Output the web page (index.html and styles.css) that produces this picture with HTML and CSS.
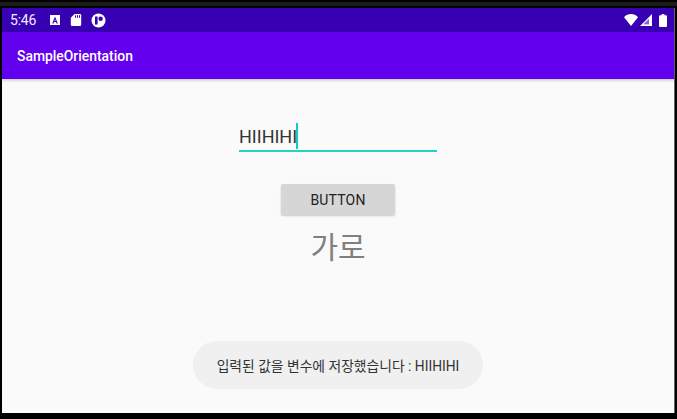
FILE: index.html
```html
<!DOCTYPE html>
<html lang="ko">
<head>
  <meta charset="UTF-8" />
  <title>SampleOrientation</title>
  <link rel="stylesheet" href="styles.css">
</head>
<body>
  <div class="screen">
    <div class="status-bar">
      <span class="clock">5:46</span>
      <div class="notif-icons">
        <svg width="12" height="12" viewBox="0 0 12 12"><path fill="#fff" d="M1 1h10v10H1z"/><path fill="#3700b3" d="M6 2.6 8.8 9.4H7.5L7 8.1H5L4.5 9.4H3.2zM5.4 7h1.2L6 5.3z"/></svg>
        <svg width="12" height="14" viewBox="0 0 12 14"><path fill="#fff" d="M4.5 1H10a1.2 1.2 0 0 1 1.2 1.2v9.6A1.2 1.2 0 0 1 10 13H2a1.2 1.2 0 0 1-1.2-1.2V4.7z"/><path fill="#3700b3" d="M5 2.2h1v2.6H5zM7 2.2h1v2.6H7zM9 2.2h1v2.6H9z"/></svg>
        <svg width="15" height="15" viewBox="0 0 15 15"><circle cx="7.5" cy="7.5" r="7" fill="#fff"/><rect x="4" y="3.5" width="2.6" height="8" fill="#3700b3"/><circle cx="9.6" cy="5.7" r="2.2" fill="#3700b3"/></svg>
      </div>
      <div class="system-icons">
        <svg width="14" height="12" viewBox="0 0 14 12"><path fill="#fff" d="M0 3.2C1.9 1.2 4.3 0 7 0s5.100 1.200 7 3.200L7 12z"/></svg>
        <svg width="12" height="12" viewBox="0 0 12 12"><path fill="#fff" fill-rule="evenodd" d="M12 0v12H0zM9 5 3.500 10.200H9z"/><path fill="#fff" opacity=".4" d="M9 5 3.500 10.200H9z"/></svg>
        <svg class="battery" width="8" height="13" viewBox="0 0 8 13"><path fill="#fff" d="M2.600 0h2.800v1.200H7a1 1 0 0 1 1 1V12a1 1 0 0 1-1 1H1a1 1 0 0 1-1-1V2.200a1 1 0 0 1 1-1h1.600z"/></svg>
      </div>
    </div>
    <div class="app-bar">SampleOrientation</div>
    <main class="content">
      <div class="edit-text"><span class="edit-value">HIIHIHI</span><span class="caret"></span></div>
      <button class="btn">BUTTON</button>
      <div class="orientation">가로</div>
      <div class="toast">입력된 값을 변수에 저장했습니다 : HIIHIHI</div>
    </main>
  </div>
</body>
</html>
```

FILE: styles.css
```css
html, body { margin: 0; height: 100%; overflow: hidden; background: #000; }
body {
  box-sizing: border-box;
  padding: 8px 2px 6px 2px;
  background: linear-gradient(#000 2px, #1c1c1c 2px, #1c1c1c 6px, #000 6px);
  background-color: #000;
  font-family: Roboto, "Noto Sans CJK KR", sans-serif;
}
.screen {
  height: 100%;
  display: flex;
  flex-direction: column;
  background: #fafafa;
  border-right: 1px solid #666;
}
.status-bar {
  height: 24px;
  flex: none;
  display: flex;
  align-items: center;
  padding: 0 7px 0 8px;
  background: #3700b3;
  color: #f2ecfb;
  font-size: 14px;
  letter-spacing: -0.2px;
}
.clock { width: 39px; }
.notif-icons { display: flex; align-items: center; gap: 9px; }
.system-icons { margin-left: auto; display: flex; align-items: center; gap: 2px; }
.battery { margin-left: 5px; }
.app-bar {
  height: 47px;
  flex: none;
  display: flex;
  align-items: center;
  padding-left: 15px;
  background: #6200ee;
  color: #fff;
  font-size: 13.9px;
  font-weight: 500;
  box-shadow: 0 1px 3px rgba(0,0,0,0.25);
}
.content {
  flex: 1;
  position: relative;
  display: flex;
  flex-direction: column;
  align-items: center;
  padding-top: 43px;
}
.edit-text {
  width: 198px;
  height: 28px;
  display: flex;
  align-items: center;
  border-bottom: 2px solid #1fd4c0;
  color: #333;
  font-size: 18px;
}
.caret { width: 2px; height: 26px; margin-left: -1px; background: #14cdb8; }
.btn {
  width: 114px;
  height: 31px;
  margin-top: 32px;
  padding: 0;
  border: none;
  border-radius: 2px;
  background: #d6d6d6;
  box-shadow: 0 1px 2px rgba(0,0,0,0.2);
  color: #222;
  font-family: inherit;
  font-size: 14px;
  font-weight: 400;
  letter-spacing: 0.2px;
}
.orientation {
  margin-top: 11px;
  color: #808080;
  font-size: 30px;
  line-height: 44px;
}
.toast {
  position: absolute;
  left: 191px;
  bottom: 24px;
  width: 290px;
  height: 48px;
  display: flex;
  align-items: center;
  justify-content: center;
  border-radius: 24px;
  background: #f0f0f0;
  color: #333;
  font-size: 13.8px;
}
```
